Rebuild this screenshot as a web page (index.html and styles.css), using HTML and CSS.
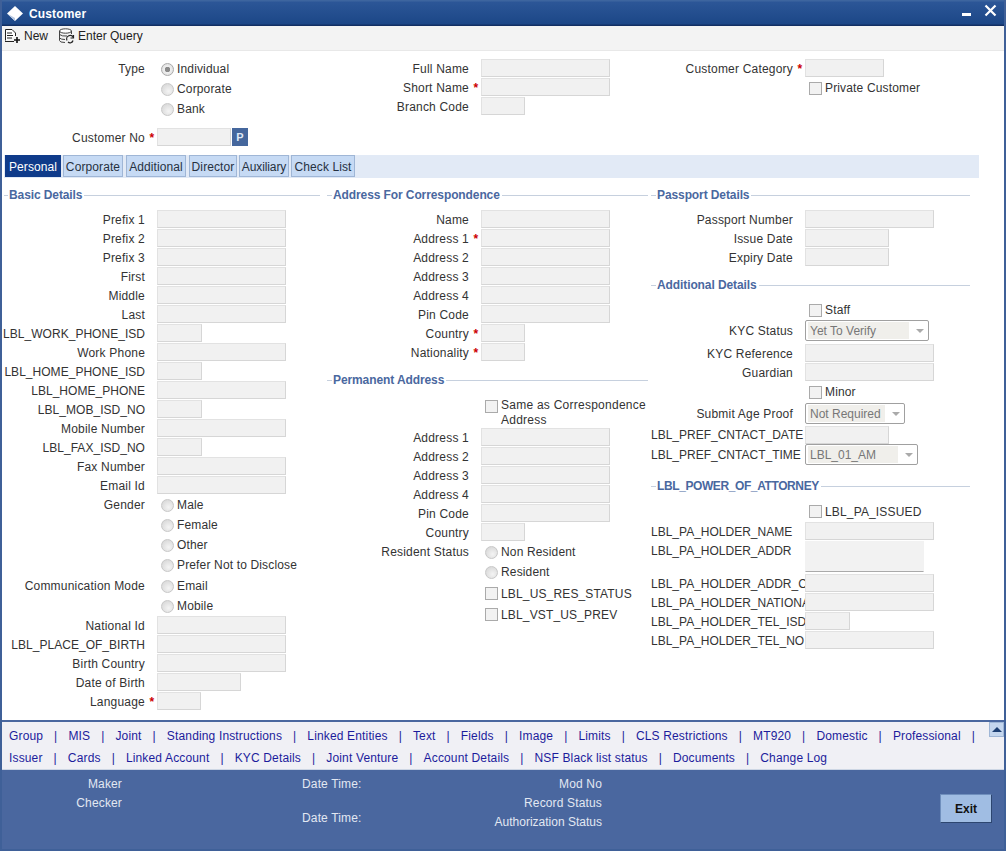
FILE: index.html
```html
<!DOCTYPE html>
<html lang="en">
<head>
<meta charset="utf-8">
<title>Customer</title>
<link rel="stylesheet" href="styles.css">
</head>
<body>
<div class="window">
  <header class="titlebar">
    <svg class="logo" width="18" height="18" viewBox="0 0 18 18"><path d="M9 1 L17 8.5 L9 16 L1 8.5 Z" fill="#fff"/><path d="M1 8.5 L9 16 L9 13 Z" fill="#b8c8e0"/></svg>
    <span class="title">Customer</span>
    <svg class="min" width="9" height="3" viewBox="0 0 9 3"><rect width="9" height="3" fill="#fff"/></svg>
    <svg class="close" width="13" height="13" viewBox="0 0 13 13"><path d="M1.5 1.5 L11.5 11.5 M11.5 1.5 L1.5 11.5" stroke="#fff" stroke-width="2.2" fill="none"/></svg>
  </header>
  <nav class="toolbar">
    <span class="tool">
      <svg width="17" height="16" viewBox="0 0 17 16"><path d="M1.5 12.5 V1.5 H8 L11.5 5 V8" fill="#fff" stroke="#222"/><path d="M3 5h5M3 7.5h6M3 10h5" stroke="#222"/><path d="M1 13.5h9" stroke="#222"/><path d="M13 9v6M10 12h6" stroke="#111" stroke-width="1.6"/></svg>
      New
    </span>
    <span class="tool">
      <svg width="17" height="16" viewBox="0 0 17 16"><ellipse cx="7.5" cy="3" rx="6" ry="2.2" fill="#fff" stroke="#444"/><path d="M1.5 3 V12.5 Q1.5 14.5 7 14.5 M13.5 3 V6 M1.5 6.5 Q4 8.5 9 8 M1.5 10 Q3 11.5 7 11.5" fill="none" stroke="#444"/><path d="M9 12.5 A3.5 3.5 0 0 1 15.5 9.5 M15.5 7 V10 H12.5 M10 14 A3 3 0 0 0 15 12.5" fill="none" stroke="#222" stroke-width="1.2"/></svg>
      Enter Query
    </span>
  </nav>

  <main class="content">
    <section class="top">
      <div class="col col-one">
        <div class="rrow"><label class="lab">Type</label><span class="star"></span><input class="radio" type="radio" name="type" checked disabled><span class="opt">Individual</span></div>
        <div class="rrow"><span class="lab"></span><span class="star"></span><input class="radio" type="radio" name="type" disabled><span class="opt">Corporate</span></div>
        <div class="rrow"><span class="lab"></span><span class="star"></span><input class="radio" type="radio" name="type" disabled><span class="opt">Bank</span></div>
        <div class="row custno"><label class="lab">Customer No</label><span class="star">*</span><input class="field w74" disabled><button class="pick" type="button">P</button></div>
      </div>
      <div class="col col-two">
        <div class="row"><label class="lab">Full Name</label><span class="star"></span><input class="field w129" disabled></div>
        <div class="row"><label class="lab">Short Name</label><span class="star">*</span><input class="field w129" disabled></div>
        <div class="row"><label class="lab">Branch Code</label><span class="star"></span><input class="field w44" disabled></div>
      </div>
      <div class="col col-three">
        <div class="row"><label class="lab">Customer Category</label><span class="star">*</span><input class="field w79" disabled></div>
        <div class="crow"><span class="lab"></span><span class="star"></span><input class="check" type="checkbox" disabled><span class="opt">Private Customer</span></div>
      </div>
    </section>

    <div class="tabs">
      <span class="tab active">Personal</span>
      <span class="tab">Corporate</span>
      <span class="tab">Additional</span>
      <span class="tab">Director</span>
      <span class="tab">Auxiliary</span>
      <span class="tab">Check List</span>
    </div>

    <section class="panels">
      <div class="col col-one">
        <h3 class="legend"><span>Basic Details</span></h3>
        <div class="row"><label class="lab">Prefix 1</label><span class="star"></span><input class="field w129" disabled></div>
        <div class="row"><label class="lab">Prefix 2</label><span class="star"></span><input class="field w129" disabled></div>
        <div class="row"><label class="lab">Prefix 3</label><span class="star"></span><input class="field w129" disabled></div>
        <div class="row"><label class="lab">First</label><span class="star"></span><input class="field w129" disabled></div>
        <div class="row"><label class="lab">Middle</label><span class="star"></span><input class="field w129" disabled></div>
        <div class="row"><label class="lab">Last</label><span class="star"></span><input class="field w129" disabled></div>
        <div class="row"><label class="lab code">LBL_WORK_PHONE_ISD</label><span class="star"></span><input class="field w45" disabled></div>
        <div class="row"><label class="lab">Work Phone</label><span class="star"></span><input class="field w129" disabled></div>
        <div class="row"><label class="lab code">LBL_HOME_PHONE_ISD</label><span class="star"></span><input class="field w45" disabled></div>
        <div class="row"><label class="lab code">LBL_HOME_PHONE</label><span class="star"></span><input class="field w129" disabled></div>
        <div class="row"><label class="lab code">LBL_MOB_ISD_NO</label><span class="star"></span><input class="field w45" disabled></div>
        <div class="row"><label class="lab">Mobile Number</label><span class="star"></span><input class="field w129" disabled></div>
        <div class="row"><label class="lab code">LBL_FAX_ISD_NO</label><span class="star"></span><input class="field w45" disabled></div>
        <div class="row"><label class="lab">Fax Number</label><span class="star"></span><input class="field w129" disabled></div>
        <div class="row"><label class="lab">Email Id</label><span class="star"></span><input class="field w129" disabled></div>
        <div class="rrow"><label class="lab">Gender</label><span class="star"></span><input class="radio" type="radio" disabled><span class="opt">Male</span></div>
        <div class="rrow"><span class="lab"></span><span class="star"></span><input class="radio" type="radio" disabled><span class="opt">Female</span></div>
        <div class="rrow"><span class="lab"></span><span class="star"></span><input class="radio" type="radio" disabled><span class="opt">Other</span></div>
        <div class="rrow"><span class="lab"></span><span class="star"></span><input class="radio" type="radio" disabled><span class="opt">Prefer Not to Disclose</span></div>
        <div class="rrow comm"><label class="lab">Communication Mode</label><span class="star"></span><input class="radio" type="radio" disabled><span class="opt">Email</span></div>
        <div class="rrow"><span class="lab"></span><span class="star"></span><input class="radio" type="radio" disabled><span class="opt">Mobile</span></div>
        <div class="row"><label class="lab">National Id</label><span class="star"></span><input class="field w129" disabled></div>
        <div class="row"><label class="lab code">LBL_PLACE_OF_BIRTH</label><span class="star"></span><input class="field w129" disabled></div>
        <div class="row"><label class="lab">Birth Country</label><span class="star"></span><input class="field w129" disabled></div>
        <div class="row"><label class="lab">Date of Birth</label><span class="star"></span><input class="field w84" disabled></div>
        <div class="row"><label class="lab">Language</label><span class="star">*</span><input class="field w44" disabled></div>
      </div>

      <div class="col col-two">
        <h3 class="legend"><span>Address For Correspondence</span></h3>
        <div class="row"><label class="lab">Name</label><span class="star"></span><input class="field w129" disabled></div>
        <div class="row"><label class="lab">Address 1</label><span class="star">*</span><input class="field w129" disabled></div>
        <div class="row"><label class="lab">Address 2</label><span class="star"></span><input class="field w129" disabled></div>
        <div class="row"><label class="lab">Address 3</label><span class="star"></span><input class="field w129" disabled></div>
        <div class="row"><label class="lab">Address 4</label><span class="star"></span><input class="field w129" disabled></div>
        <div class="row"><label class="lab">Pin Code</label><span class="star"></span><input class="field w129" disabled></div>
        <div class="row"><label class="lab">Country</label><span class="star">*</span><input class="field w44" disabled></div>
        <div class="row"><label class="lab">Nationality</label><span class="star">*</span><input class="field w44" disabled></div>
        <h3 class="legend legend-perm"><span>Permanent Address</span></h3>
        <div class="same"><span class="lab"></span><span class="star"></span><input class="check" type="checkbox" disabled><span class="opt wrap">Same as Correspondence Address</span></div>
        <div class="row"><label class="lab">Address 1</label><span class="star"></span><input class="field w129" disabled></div>
        <div class="row"><label class="lab">Address 2</label><span class="star"></span><input class="field w129" disabled></div>
        <div class="row"><label class="lab">Address 3</label><span class="star"></span><input class="field w129" disabled></div>
        <div class="row"><label class="lab">Address 4</label><span class="star"></span><input class="field w129" disabled></div>
        <div class="row"><label class="lab">Pin Code</label><span class="star"></span><input class="field w129" disabled></div>
        <div class="row"><label class="lab">Country</label><span class="star"></span><input class="field w44" disabled></div>
        <div class="rrow"><label class="lab">Resident Status</label><span class="star"></span><input class="radio" type="radio" disabled><span class="opt">Non Resident</span></div>
        <div class="rrow"><span class="lab"></span><span class="star"></span><input class="radio" type="radio" disabled><span class="opt">Resident</span></div>
        <div class="crow c21 usres"><span class="lab"></span><span class="star"></span><input class="check" type="checkbox" disabled><span class="opt">LBL_US_RES_STATUS</span></div>
        <div class="crow c21"><span class="lab"></span><span class="star"></span><input class="check" type="checkbox" disabled><span class="opt">LBL_VST_US_PREV</span></div>
      </div>

      <div class="col col-three">
        <h3 class="legend"><span>Passport Details</span></h3>
        <div class="row"><label class="lab">Passport Number</label><span class="star"></span><input class="field w129" disabled></div>
        <div class="row"><label class="lab">Issue Date</label><span class="star"></span><input class="field w84" disabled></div>
        <div class="row"><label class="lab">Expiry Date</label><span class="star"></span><input class="field w84" disabled></div>
        <h3 class="legend legend-add"><span>Additional Details</span></h3>
        <div class="crow staff"><span class="lab"></span><span class="star"></span><input class="check" type="checkbox" disabled><span class="opt">Staff</span></div>
        <div class="srow kyc"><label class="lab">KYC Status</label><span class="star"></span><span class="select w124"><span class="val w104">Yet To Verify</span><i class="caret"></i></span></div>
        <div class="row"><label class="lab">KYC Reference</label><span class="star"></span><input class="field w129" disabled></div>
        <div class="row"><label class="lab">Guardian</label><span class="star"></span><input class="field w129" disabled></div>
        <div class="crow minor"><span class="lab"></span><span class="star"></span><input class="check" type="checkbox" disabled><span class="opt">Minor</span></div>
        <div class="srow age"><label class="lab">Submit Age Proof</label><span class="star"></span><span class="select w100"><span class="val w78">Not Required</span><i class="caret"></i></span></div>
        <div class="row pref"><label class="lab wide">LBL_PREF_CNTACT_DATE</label><input class="field w84" disabled></div>
        <div class="srow"><label class="lab wide">LBL_PREF_CNTACT_TIME</label><span class="select w113"><span class="val w90">LBL_01_AM</span><i class="caret"></i></span></div>
        <h3 class="legend legend-poa"><span>LBL_POWER_OF_ATTORNEY</span></h3>
        <div class="crow pa"><span class="lab"></span><span class="star"></span><input class="check" type="checkbox" disabled><span class="opt">LBL_PA_ISSUED</span></div>
        <div class="row"><label class="lab wide">LBL_PA_HOLDER_NAME</label><input class="field w129" disabled></div>
        <div class="row tall"><label class="lab wide">LBL_PA_HOLDER_ADDR</label><textarea class="field area" disabled></textarea></div>
        <div class="row"><label class="lab wide">LBL_PA_HOLDER_ADDR_CONT</label><input class="field w129" disabled></div>
        <div class="row"><label class="lab wide">LBL_PA_HOLDER_NATIONALITY</label><input class="field w129" disabled></div>
        <div class="row"><label class="lab wide">LBL_PA_HOLDER_TEL_ISD</label><input class="field w45" disabled></div>
        <div class="row"><label class="lab wide">LBL_PA_HOLDER_TEL_NO</label><input class="field w129" disabled></div>
      </div>
    </section>
  </main>

  <nav class="links">
    <div class="linkrows">
      <div class="linkrow">
        <a>Group</a><b>|</b><a>MIS</a><b>|</b><a>Joint</a><b>|</b><a>Standing Instructions</a><b>|</b><a>Linked Entities</a><b>|</b><a>Text</a><b>|</b><a>Fields</a><b>|</b><a>Image</a><b>|</b><a>Limits</a><b>|</b><a>CLS Restrictions</a><b>|</b><a>MT920</a><b>|</b><a>Domestic</a><b>|</b><a>Professional</a><b>|</b>
      </div>
      <div class="linkrow">
        <a>Issuer</a><b>|</b><a>Cards</a><b>|</b><a>Linked Account</a><b>|</b><a>KYC Details</a><b>|</b><a>Joint Venture</a><b>|</b><a>Account Details</a><b>|</b><a>NSF Black list status</a><b>|</b><a>Documents</a><b>|</b><a>Change Log</a>
      </div>
    </div>
    <span class="scrollup"><i></i></span>
  </nav>

  <footer class="audit">
    <div class="a1"><div class="a-row">Maker</div><div class="a-row">Checker</div></div>
    <div class="a2"><div class="a-row">Date Time:</div><div class="a-row a-gap">Date Time:</div></div>
    <div class="a3"><div class="a-row">Mod No</div><div class="a-row">Record Status</div><div class="a-row">Authorization Status</div></div>
    <button class="exit" type="button">Exit</button>
  </footer>
</div>
</body>
</html>
```

FILE: styles.css
```css
* { box-sizing: border-box; }
html, body { margin: 0; padding: 0; }
body {
  font-family: "Liberation Sans", Arial, sans-serif;
  font-size: 12px;
  letter-spacing: .15px;
  color: #333;
  background: #fff;
}
.window {
  width: 1006px;
  height: 851px;
  display: flex;
  flex-direction: column;
  border: 2px solid #3f6098;
  border-top: 0;
  background: #fff;
  overflow: hidden;
}
.titlebar {
  flex: 0 0 26px;
  margin: 0 -2px;
  display: flex;
  align-items: center;
  background: linear-gradient(#3d659f 0, #3d659f 1px, #2c5697 2px, #1c4787 24px, #122f63 25px, #122f63 26px);
  color: #fff;
  padding: 2px 0 0 6px;
}
.logo { margin-right: 5px; margin-top: -1px; }
.title { font-weight: bold; font-size: 12px; flex: 1; }
.min { margin-top: 1px; margin-right: 13px; }
.close { margin-top: -8px; margin-right: 9px; }

.toolbar {
  flex: 0 0 25px;
  display: flex;
  align-items: center;
  background: #f3f3f3;
  border-bottom: 1px solid #e8e8e8;
  padding: 0 0 5px 2px;
  gap: 10px;
  color: #222;
  letter-spacing: 0;
}
.tool { display: flex; align-items: center; gap: 3px; }

.content { flex: 1; min-height: 0; }
.top { display: flex; height: 104px; padding-top: 8px; }
.col { width: 324px; flex: none; }
.col-three { width: 322px; }

.row, .rrow, .crow, .srow, .same { display: flex; align-items: center; white-space: nowrap; }
.row { height: 19px; }
.rrow { height: 20px; }
.crow { height: 20px; }
.lab { flex: none; width: 143px; text-align: right; color: #333; letter-spacing: .2px; }
.lab.code { letter-spacing: .03px; }
.col-three .lab { width: 142px; margin-left: 1px; }
.col-three .lab.wide { width: 154px; text-align: left; overflow: hidden; letter-spacing: 0; }
.star { flex: none; width: 12px; color: #c00; font-weight: bold; text-align: center; padding-left: 2px; }
.field {
  flex: none;
  height: 18px;
  background: #f1f1f1;
  border: 1px solid #e2e2e2;
  border-bottom-color: #d6d6d6;
  border-right-color: #d6d6d6;
  padding: 0;
  margin: 0 0 1px;
  display: block;
  resize: none;
  font: inherit;
}
.w44 { width: 44px; }
.w45 { width: 45px; }
.w74 { width: 74px; }
.w79 { width: 79px; }
.w84 { width: 84px; }
.w129 { width: 129px; }
.area { width: 119px; height: 31px; background: #f2f2f2; border-color: #f2f2f2 #f2f2f2 #aaa; }
.row.tall { height: 33px; align-items: flex-start; }
.row.tall .lab { line-height: 18px; padding-top: 1px; }
.row.pref { height: 18px; }
.row.pref .field { margin: 0; }

.radio {
  appearance: none;
  flex: none;
  width: 13px;
  height: 13px;
  margin: 0 3px 0 4px;
  border-radius: 50%;
  border: 1px solid #c8c8c8;
  background: radial-gradient(circle at 60% 65%, #f4f4f4, #d2d2d2);
}
.radio:checked {
  background: radial-gradient(circle, #8a8a8a 0, #8a8a8a 2.5px, #efefef 3px, #d8d8d8);
  border-color: #aaa;
}
.check {
  appearance: none;
  flex: none;
  width: 13px;
  height: 13px;
  margin: 0 3px 0 4px;
  border: 1px solid #aaa;
  background: #f2f2f2;
}
.opt { color: #333; }
.wrap { white-space: normal; width: 150px; line-height: 15px; letter-spacing: .25px; }
.custno { margin-top: 9px; }
.pick {
  width: 16px;
  height: 18px;
  padding: 0;
  margin: 0 0 1px 1px;
  border: 0;
  background: #45679d;
  color: #dfe8f5;
  font: bold 11px "Liberation Sans", sans-serif;
}

.tabs {
  display: flex;
  height: 23px;
  width: 975px;
  margin-left: 2px;
  padding-left: 1px;
  gap: 2px;
  background: #e2eaf6;
  letter-spacing: .1px;
}
.tab {
  height: 22px;
  padding-top: 1px;
  display: flex;
  align-items: center;
  justify-content: center;
  background: #c6daf4;
  border: 1px solid #9fb6d6;
  color: #26313f;
  white-space: nowrap;
}
.tab:nth-child(1) { width: 56px; }
.tab:nth-child(2) { width: 60px; }
.tab:nth-child(3) { width: 60px; margin-left: 1px; }
.tab:nth-child(4) { width: 48px; margin-left: 1px; }
.tab:nth-child(5) { width: 50px; letter-spacing: -.1px; }
.tab:nth-child(6) { width: 64px; }
.tab.active {
  background: #0f3b8a;
  border-color: #0f3b8a;
  color: #fff;
}

.panels { display: flex; padding-top: 8px; }
.legend {
  margin: 0 0 6px;
  height: 18px;
  display: flex;
  align-items: center;
  font-size: 12px;
  font-weight: bold;
  letter-spacing: -.1px;
  color: #4a689f;
}
.legend::before, .legend::after { content: ""; height: 1px; background: #c6d0de; }
.legend::before { flex: 0 0 5px; margin-right: 1px; }
.legend::after { flex: 1; margin-left: 2px; }
.col-one .legend { margin-left: 2px; margin-right: 6px; }
.col-one .legend::before { flex-basis: 4px; }
.col-two .legend { margin-left: 1px; margin-right: 2px; }
.col-three .legend { margin-left: 1px; margin-right: 2px; }
.legend-perm { margin-top: 9px; margin-bottom: 9px; }
.col-three .legend-add { margin-top: 9px; margin-bottom: 6px; }
.col-three .legend-poa { margin-top: 12px; margin-bottom: 6px; letter-spacing: -.4px; }

.same { height: 30px; align-items: flex-start; }
.same .check { margin-top: 2px; }
.c21 { height: 21px; }
.usres { margin-top: 1px; }
.srow { height: 21px; }
.kyc { margin-bottom: 3px; }
.age { margin-top: 1px; margin-bottom: 2px; }
.pa { height: 21px; }
.comm { margin-top: 1px; }

.select {
  flex: none;
  height: 21px;
  display: flex;
  align-items: center;
  justify-content: space-between;
  border: 1px solid #a0a0a0;
  border-radius: 2px;
  background: #fff;
  padding: 0 4px 0 2px;
}
.w124 { width: 124px; }
.w100 { width: 100px; }
.w113 { width: 113px; }
.val { background: #f0efeb; color: #777; padding-left: 2px; height: 17px; line-height: 19px; display: block; letter-spacing: 0; }
.w104 { width: 101px; }
.w78 { width: 77px; }
.w90 { width: 90px; }
.caret { width: 0; height: 0; border-left: 4px solid transparent; border-right: 4px solid transparent; border-top: 4px solid #aaa; }

.links {
  flex: 0 0 48px;
  display: flex;
  justify-content: space-between;
  background: #f0f0f5;
  border-top: 2px solid #4a679f;
  border-bottom: 1px solid #cdd6e4;
}
.linkrows { padding-left: 7px; padding-top: 3px; }
.linkrow { display: flex; height: 22px; align-items: center; gap: 11px; white-space: nowrap; color: #1c1c9c; }
.linkrow b { font-weight: normal; color: #1c1c9c; }
.scrollup { flex: none; width: 15px; height: 15px; background: #c4d6ee; border: 1px solid #9fb6d6; display: flex; align-items: center; justify-content: center; }
.scrollup i { width: 0; height: 0; border-left: 5px solid transparent; border-right: 5px solid transparent; border-bottom: 5px solid #1d3f73; }

.audit {
  flex: 0 0 79px;
  display: flex;
  align-items: flex-start;
  margin: 0 -2px;
  padding: 5px 0 0;
  background: #4a679f;
  color: #e2e8f2;
}
.a-row { height: 18px; line-height: 18px; white-space: nowrap; }
.a-row:nth-child(2) { margin-top: 1px; }
.a1 { width: 122px; text-align: right; }
.a2 { width: 180px; margin-left: 180px; }
.a2 .a-gap { margin-top: 16px; }
.a3 { width: 300px; margin-left: -180px; text-align: right; }
.a3 .a-row:nth-child(3) { margin-top: 1px; letter-spacing: 0; }
.exit {
  margin: 19px 0 0 338px;
  width: 52px;
  height: 29px;
  padding: 0;
  background: #a0bde3;
  border: 1px solid #6f8fbd;
  border-bottom-color: #2d4670;
  border-right-color: #2d4670;
  color: #111;
  font: bold 12px "Liberation Sans", sans-serif;
}
a { color: inherit; }
```
